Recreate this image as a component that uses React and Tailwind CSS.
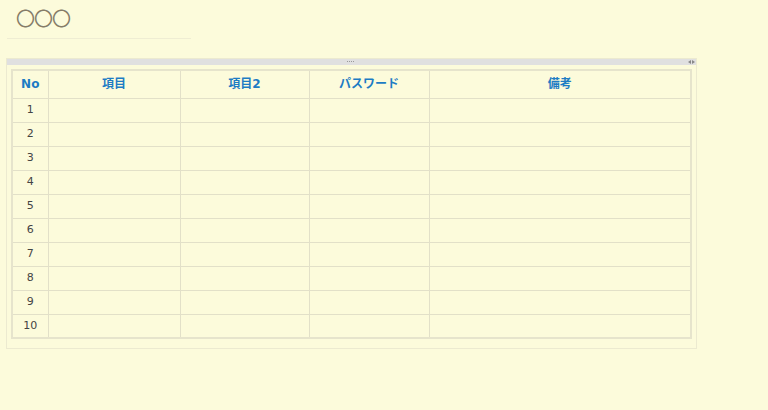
import React from 'react';

const columns = [
    { label: 'No', w: 'w-[36px]' },
    { label: '項目', w: 'w-[132px]' },
    { label: '項目2', w: 'w-[129px]' },
    { label: 'パスワード', w: 'w-[120px]' },
    { label: '備考', w: '' },
];

const rows = Array.from({ length: 10 }, (_, i) => i + 1);

export default function App() {
    return (
        <div className="min-h-[410px] w-[768px] bg-[#fcfbdb] font-['Noto_Sans','Noto_Sans_CJK_JP',sans-serif]">
            <div className="pl-[16px] pt-[6px]">
                <h1 className="text-[19px] leading-[24px] text-[#857c68] font-['Noto_Sans_CJK_JP',sans-serif] font-normal tracking-[-1px]">〇〇〇</h1>
            </div>
            <div className="ml-[7px] mt-[8px] w-[184px] border-t border-[#efedd3]" />

            {/* panel */}
            <div className="ml-[6px] mt-[19px] w-[691px] border border-[#ecead0]">
                <div className="relative h-[6px] bg-[#e0e0e0]">
                    <div className="absolute left-[340px] top-[2px] flex gap-[1px]">
                        <span className="w-[1px] h-[1px] bg-[#999]" />
                        <span className="w-[1px] h-[1px] bg-[#999]" />
                        <span className="w-[1px] h-[1px] bg-[#999]" />
                        <span className="w-[1px] h-[1px] bg-[#999]" />
                    </div>
                    <div className="absolute right-[1px] top-[1px] flex gap-[1px] text-[#888]">
                        <svg width="3" height="4" viewBox="0 0 3 4"><path d="M3 0 L0 2 L3 4Z" fill="currentColor" /></svg>
                        <svg width="3" height="4" viewBox="0 0 3 4"><path d="M0 0 L3 2 L0 4Z" fill="currentColor" /></svg>
                    </div>
                </div>
                <div className="pl-[4px] pr-[4px] pt-[4px] pb-[9px]">
                    <table className="w-[681px] border-collapse table-fixed border-2 border-[#e6e4cc]">
                        <thead>
                            <tr className="h-[28px]">
                                {columns.map((c) => (
                                    <th key={c.label} className={`${c.w} border border-[#e2e0c8] text-[12px] font-bold text-[#1d7cc4] font-['DejaVu_Sans','Noto_Sans_CJK_JP',sans-serif] p-0`}>
                                        {c.label}
                                    </th>
                                ))}
                            </tr>
                        </thead>
                        <tbody>
                            {rows.map((n) => (
                                <tr key={n} className="h-[24px]">
                                    <td className="border border-[#e2e0c8] text-center text-[11px] text-[#444] font-['DejaVu_Sans',sans-serif] p-0">{n}</td>
                                    <td className="border border-[#e2e0c8]" />
                                    <td className="border border-[#e2e0c8]" />
                                    <td className="border border-[#e2e0c8]" />
                                    <td className="border border-[#e2e0c8]" />
                                </tr>
                            ))}
                        </tbody>
                    </table>
                </div>
            </div>
        </div>
    );
}
